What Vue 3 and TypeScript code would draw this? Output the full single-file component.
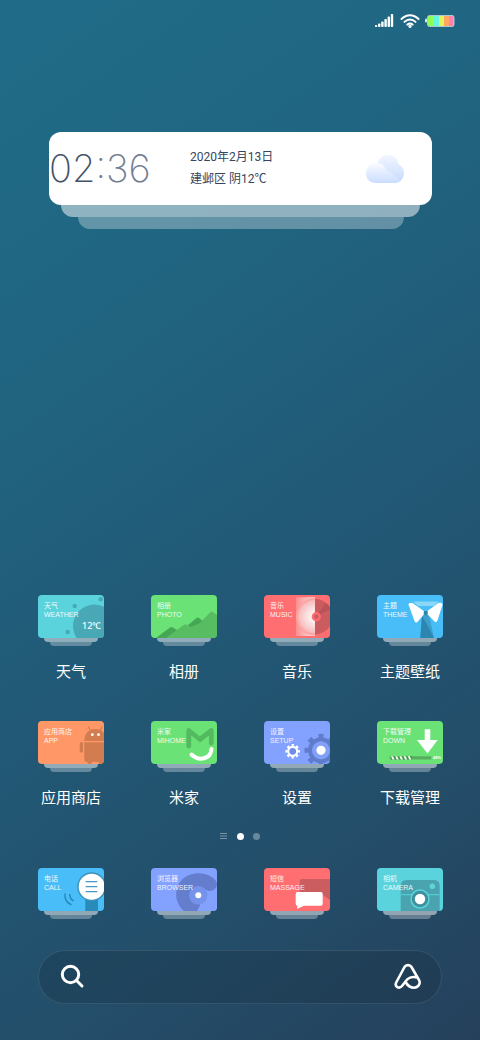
<script setup lang="ts">
interface AppItem {
  id: string
  label: string
  zh: string
  en: string
  tone: string
}

const apps: AppItem[] = [
  { id: 'weather', label: '天气', zh: '天气', en: 'WEATHER', tone: 'cyan' },
  { id: 'photo', label: '相册', zh: '相册', en: 'PHOTO', tone: 'green' },
  { id: 'music', label: '音乐', zh: '音乐', en: 'MUSIC', tone: 'red' },
  { id: 'theme', label: '主题壁纸', zh: '主题', en: 'THEME', tone: 'blue' },
  { id: 'store', label: '应用商店', zh: '应用商店', en: 'APP', tone: 'orange' },
  { id: 'mihome', label: '米家', zh: '米家', en: 'MIHOME', tone: 'green' },
  { id: 'setup', label: '设置', zh: '设置', en: 'SETUP', tone: 'violet' },
  { id: 'down', label: '下载管理', zh: '下载管理', en: 'DOWN', tone: 'green' },
]

const dock: AppItem[] = [
  { id: 'call', label: '', zh: '电话', en: 'CALL', tone: 'blue' },
  { id: 'browser', label: '', zh: '浏览器', en: 'BROWSER', tone: 'violet' },
  { id: 'message', label: '', zh: '短信', en: 'MASSAGE', tone: 'red' },
  { id: 'camera', label: '', zh: '相机', en: 'CAMERA', tone: 'cyan' },
]

const groups = [
  { name: 'apps', items: apps },
  { name: 'dock', items: dock },
]
</script>

<template>
  <div class="screen">
    <header class="status">
      <svg width="19" height="14" viewBox="0 0 19 14" fill="#fff">
        <rect x="0" y="11" width="2.200" height="2" rx=".8" />
        <rect x="3" y="9.500" width="2.400" height="3.500" rx=".8" />
        <rect x="6.200" y="7.500" width="2.400" height="5.500" rx=".8" />
        <rect x="9.400" y="5" width="2.400" height="8" rx=".8" />
        <rect x="12.600" y="2.500" width="2.400" height="10.500" rx=".8" />
        <rect x="15.800" y="0" width="2.400" height="13" rx=".8" />
      </svg>
      <svg class="wifi" width="20" height="14" viewBox="0 0 20 14" fill="none" stroke="#fff" stroke-width="2" stroke-linecap="round">
        <path d="M1.500 5C6.500 -.1 13.500 -.1 18.500 5" />
        <path d="M4.500 7.900C7.800 4.600 12.200 4.600 15.500 7.900" />
        <path d="M7.300 10.600C8.900 9 11.100 9 12.700 10.600" />
        <circle cx="10" cy="12.300" r=".7" />
      </svg>
      <svg width="30" height="14" viewBox="0 0 30 14">
        <rect x="0" y="4.500" width="2" height="4" rx="1" fill="#dbe8ec" />
        <rect x="2.500" y="1.500" width="26.500" height="11" rx="2" fill="#8dff52" />
        <path d="M8.500 1.500h5.500v11H8.500z" fill="#63f7e2" />
        <path d="M14 1.500h5v11h-5z" fill="#e5f35a" />
        <path d="M19 1.500h5v11h-5z" fill="#ffa760" />
        <path d="M24 1.500h4.500v11H24z" fill="#ff82b2" />
        <rect x="2.500" y="1.500" width="26.500" height="11" rx="2" fill="none" stroke="#a9c8d0" />
      </svg>
    </header>

    <section class="widget">
      <div class="panel">
        <time class="clock"><span class="hour">02</span><span class="minute">:36</span></time>
        <div class="info">
          <span>2020年2月13日</span>
          <span>建邺区 阴12℃</span>
        </div>
        <svg class="cloud" width="40" height="30" viewBox="0 0 40 30">
          <defs>
            <linearGradient id="cloudBack" x1="0" y1="0" x2="0" y2="1">
              <stop offset="0" stop-color="#f2f6ff" />
              <stop offset="1" stop-color="#c6dafd" />
            </linearGradient>
            <linearGradient id="cloudFront" x1="0" y1="0" x2="0" y2="1">
              <stop offset="0" stop-color="#fbfcff" />
              <stop offset="1" stop-color="#c9dcff" />
            </linearGradient>
          </defs>
          <path d="M12 11C14 4 18 1 23 1C29 1 33 5 33.500 10C37 12 39 15 39 19C39 25 35 29 29 29H12Z" fill="url(#cloudBack)" />
          <path d="M11 29C5 29 1 25 1 19.500C1 13 6 9 11.500 9C17 9 20 12 21 16C25 18 29 21 35 27C33 28.500 31 29 29 29Z" fill="url(#cloudFront)" />
        </svg>
      </div>
      <div class="layer layer-one"></div>
      <div class="layer layer-two"></div>
    </section>

    <main class="home">
      <template v-for="group in groups" :key="group.name">
        <nav class="grid" :class="group.name">
          <button v-for="app in group.items" :key="app.id" type="button" class="app" :aria-label="app.zh">
            <span class="card" :class="app.tone">
              <svg class="art" viewBox="0 0 66 43">
                <g v-if="app.id === 'weather'">
                  <g fill="#48a8b5">
                    <circle cx="56.500" cy="31" r="21.500" />
                    <circle cx="36.700" cy="11" r="2.200" />
                    <circle cx="62.700" cy="4.300" r="2.200" />
                    <circle cx="29.700" cy="37" r="2.200" />
                  </g>
                  <text x="44" y="34" class="degree">12℃</text>
                </g>
                <g v-else-if="app.id === 'photo'">
                  <path d="M5 43L19 32.500Q20.500 31.500 22 32.500L30 38L27 43ZM36 31L45.500 23Q46.700 22 48 23L54 28L44 36Z" fill="#45a653" />
                  <path d="M15 43L33 29.800Q34.500 28.800 36 29.800L40 32L49 28L59.500 17Q60.700 16 62 17L66 20V43Z" fill="#58bd62" />
                </g>
                <g v-else-if="app.id === 'music'">
                  <defs>
                    <radialGradient id="disc" gradientUnits="userSpaceOnUse" cx="51" cy="21.700" r="19">
                      <stop offset="0" stop-color="#fff" />
                      <stop offset=".5" stop-color="#fbdcdc" />
                      <stop offset=".85" stop-color="#f7bcbc" />
                      <stop offset=".88" stop-color="#fcaaaa" />
                      <stop offset="1" stop-color="#fca4a4" />
                    </radialGradient>
                    <linearGradient id="sleeve" x1="0" x2="1" y1="0" y2="0">
                      <stop offset="0" stop-color="#fa8e8e" />
                      <stop offset="1" stop-color="#fde4e4" />
                    </linearGradient>
                  </defs>
                  <path d="M32 2.300H51V41H32Z" fill="url(#sleeve)" />
                  <path d="M51 2.700A19 19 0 0 0 51 40.700Z" fill="url(#disc)" />
                  <path d="M51 4A17.700 17.700 0 0 1 51 39.400Z" fill="#ca5c60" />
                  <path d="M51 21.700L62 8A17.700 17.700 0 0 1 67 14Z" fill="#b85458" />
                  <circle cx="52.300" cy="21.700" r="3.400" fill="#c65d61" stroke="#ff6b6e" stroke-width="2.400" />
                </g>
                <g v-else-if="app.id === 'theme'">
                  <path d="M36 6.500H62L57 11H41Z" fill="#8bd7f8" />
                  <path d="M48.600 16L52.500 22L57 43H43.300L45 22Z" fill="#3ba0cd" />
                  <path d="M45 21L48.600 27L57 43H43.300Z" fill="#2c86b0" />
                  <path d="M31.500 9.500Q32 6.800 35.500 8L48.600 17.300L40.500 27Q38.500 28.500 37.500 26Z" fill="#fff" />
                  <path d="M65.500 9.500Q65 6.800 61.500 8L48.600 17.300L57.500 26.500Q59.500 28 60.500 25.500Z" fill="#fff" />
                  <path d="M47 16H50.500L51 18.500L48.700 20.500L46.500 18.500Z" fill="#2b86af" />
                </g>
                <g v-else-if="app.id === 'store'">
                  <g fill="#d27c50">
                    <path d="M46.300 20C46.300 12 51 8 57.300 8S68.300 12 68.300 20Z" />
                    <path d="M46.300 21.300H66V41H49Q46.300 41 46.300 38Z" />
                    <rect x="41.700" y="21" width="3.300" height="10.500" rx="1.600" />
                    <path d="M49.500 40h4.500v2q-2.200 2-4.500 0zM60.500 40h4.500v2q-2.200 2-4.500 0z" />
                  </g>
                  <path d="M50.500 6L53 10M64 6L61.500 10" stroke="#d27c50" stroke-width="1.200" stroke-linecap="round" />
                  <circle cx="54.300" cy="13.700" r="1.400" fill="#fff" />
                  <circle cx="60.500" cy="13.700" r="1.400" fill="#fff" />
                </g>
                <g v-else-if="app.id === 'mihome'" fill="none" stroke-linecap="round" stroke-linejoin="round">
                  <path d="M37.800 25V9.500L49 18.500L60.300 9.500V22" stroke="#54ba5f" stroke-width="4.800" />
                  <path d="M40.500 33.500C48 40.500 59.500 38.500 60.500 28" stroke="#fff" stroke-width="4" />
                </g>
                <g v-else-if="app.id === 'setup'">
                  <circle cx="57" cy="29.300" r="13" fill="#5f7ccc" />
                  <circle cx="57" cy="29.300" r="14" pathLength="160" fill="none" stroke="#5f7ccc" stroke-width="5" stroke-dasharray="9 11" stroke-dashoffset="4.500" />
                  <circle cx="57" cy="29.300" r="9" fill="#82a0f7" />
                  <circle cx="57" cy="29.300" r="4.600" fill="#fff" />
                  <circle cx="28.700" cy="30.300" r="4.500" fill="#708fe2" stroke="#fff" stroke-width="2.200" />
                  <circle cx="28.700" cy="30.300" r="6.300" pathLength="160" fill="none" stroke="#fff" stroke-width="2" stroke-dasharray="10 10" stroke-dashoffset="5" />
                </g>
                <g v-else-if="app.id === 'down'">
                  <path d="M47.700 8.300H53.300V19H60.700L50.500 32.500L40 19H47.700Z" fill="#fff" />
                  <path d="M12.700 35.300H54.300V38.500H12.700Z" fill="#58ad61" />
                  <path d="M14 36.900H35" stroke="#449b50" stroke-width="3.200" />
                  <path d="M14 35.300h2l1.500 3.200h-2zM18.200 35.300h2l1.500 3.200h-2zM22.400 35.300h2l1.500 3.200h-2zM26.600 35.300h2l1.500 3.200h-2zM30.800 35.300h2l1.500 3.200h-2z" fill="#fff" />
                  <text x="56" y="38" class="percent">48%</text>
                </g>
                <g v-else-if="app.id === 'call'">
                  <path d="M47.300 30H60V43H47.300Z" fill="#298bb9" />
                  <circle cx="53.700" cy="18.700" r="14.500" fill="#3c93be" />
                  <circle cx="53.700" cy="18.700" r="13" fill="#fff" />
                  <path d="M47.600 13.700H59.300M47.600 18.700H59.300M47.600 23.700H59.300" stroke="#4299c5" stroke-width="1.200" />
                  <path d="M27 25.500C26.500 31 29 35 33.500 36.800M31.800 26C31.500 29 33 31.500 35.500 33" fill="none" stroke="#2387b8" stroke-width="1.400" />
                </g>
                <g v-else-if="app.id === 'browser'">
                  <path d="M33 43C21 33 23 13 38 7C48 3 60 6 65 13C69 20 60 25 55.500 22L47 27L50 43Z" fill="#647dcc" />
                  <path d="M56 24L66 22V43H46Z" fill="#83a1ff" />
                  <circle cx="47.300" cy="27.300" r="9.300" fill="#7693ec" />
                  <circle cx="47.300" cy="27.300" r="3" fill="#fff" />
                </g>
                <g v-else-if="app.id === 'message'">
                  <path d="M38 11H66V32L59 27H38Q35.700 27 35.700 24.700V13.300Q35.700 11 38 11Z" fill="#cb5c60" />
                  <path d="M33.700 24H56.700Q58.700 24 58.700 26V35.700Q58.700 37.700 56.700 37.700H40L33 41L33.500 37.700Q31.700 37.700 31.700 35.700V26Q31.700 24 33.700 24Z" fill="#fff" />
                </g>
                <g v-else>
                  <path d="M23.700 18Q23.700 12 29.500 12H57Q62.700 12 62.700 18V43H23.700Z" fill="#49a4b0" />
                  <path d="M23.700 26.700H62.700" stroke="#5bd3dc" />
                  <circle cx="43" cy="31" r="9" fill="#3f919e" stroke="#5bd3dc" stroke-width="1.500" />
                  <circle cx="43" cy="31" r="5.200" fill="#fff" />
                  <circle cx="55.300" cy="18.300" r="2.800" fill="#5fd2db" />
                </g>
              </svg>
              <span class="caption">{{ app.zh }}</span>
              <span class="caption">{{ app.en }}</span>
            </span>
            <span class="shelf shelf-one"></span>
            <span class="shelf shelf-two"></span>
            <span v-if="app.label" class="label">{{ app.label }}</span>
          </button>
        </nav>
        <div v-if="group.name === 'apps'" class="pager">
          <svg width="8" height="8" viewBox="0 0 8 8" stroke="#7894a6" stroke-width="1">
            <path d="M0 1.500H7M0 4H7M0 6.500H7" />
          </svg>
          <span class="dot current"></span>
          <span class="dot"></span>
        </div>
      </template>
      <form class="search" role="search" @submit.prevent>
        <button type="submit" aria-label="搜索">
          <svg width="26" height="26" viewBox="0 0 26 26" fill="none" stroke="#fff" stroke-width="3" stroke-linecap="round">
            <circle cx="10.500" cy="10.500" r="8.200" />
            <path d="M16.800 16.800L22 22" />
          </svg>
        </button>
        <input type="search" aria-label="搜索内容" />
        <button type="button" aria-label="语音助手">
          <svg width="28" height="28" viewBox="0 0 28 28" fill="none" stroke="#fff" stroke-width="2.600" stroke-linecap="round" stroke-linejoin="round">
            <path d="M23.500 14.500C18 13 13.500 15 11.500 18.500L8 23C5 26.500 .3 23.500 2.200 19.500L10.500 4C12 1.500 16 1.500 17.500 4L25 17C27 21 24 24.700 20 24.700C16 24.700 13.500 22.500 11.500 19" />
          </svg>
        </button>
      </form>
    </main>
  </div>
</template>

<style>
body {
  margin: 0;
}
</style>

<style scoped>
.screen {
  box-sizing: border-box;
  min-height: 100vh;
  display: flex;
  flex-direction: column;
  padding-bottom: 36px;
  color: #fff;
  font-family: Roboto, "Noto Sans CJK SC", sans-serif;
  background: linear-gradient(145deg, #206c88 0%, #206682 25%, #215a77 52%, #234f6b 76%, #25405b 100%);
}

.status {
  display: flex;
  justify-content: flex-end;
  padding: 14px 25px 0;
}

.wifi {
  margin: 0 5px 0 6px;
}

.widget {
  margin: 104px 48px 0 49px;
}

.panel {
  display: flex;
  align-items: center;
  height: 73px;
  border-radius: 12px;
  background: #fff;
  color: #36445e;
}

.clock {
  width: 141px;
  padding-bottom: 2px;
  font-family: Inter, sans-serif;
  font-size: 38px;
  font-weight: 200;
  white-space: nowrap;
}

.hour {
  color: #43516a;
}

.minute {
  color: #737f91;
}

.info {
  flex: 1;
  display: flex;
  flex-direction: column;
  padding-bottom: 2px;
  font-size: 12px;
  line-height: 22px;
}

.cloud {
  margin-right: 27px;
}

.layer {
  height: 12px;
  border-radius: 0 0 12px 12px;
}

.layer-one {
  margin: 0 12px;
  background: rgba(255, 255, 255, 0.5);
}

.layer-two {
  margin: 0 28px 0 29px;
  background: rgba(255, 255, 255, 0.3);
}

.home {
  margin-top: auto;
}

.grid {
  display: grid;
  grid-template-columns: repeat(4, 66px);
  justify-content: space-between;
  row-gap: 40px;
  padding: 0 37px 0 38px;
}

.app {
  display: flex;
  flex-direction: column;
  align-items: center;
  padding: 0;
  border: 0;
  background: none;
  color: inherit;
  font: inherit;
}

.card {
  box-sizing: border-box;
  position: relative;
  display: flex;
  flex-direction: column;
  width: 66px;
  height: 43px;
  padding: 6px 0 0 6px;
  border-radius: 4px;
  overflow: hidden;
  text-align: left;
}

.art {
  position: absolute;
  inset: 0;
  width: 100%;
  height: 100%;
}

.caption {
  position: relative;
  font-family: "Liberation Sans", "Noto Sans CJK SC", sans-serif;
  font-size: 7px;
  line-height: 9px;
  white-space: nowrap;
  opacity: 0.9;
}

.degree {
  fill: #fff;
  font: 500 9px "Noto Sans", "Noto Sans CJK SC", sans-serif;
}

.percent {
  fill: #fff;
  font: 700 4px "Liberation Sans", sans-serif;
}

.cyan {
  background: #5bd3dd;
}

.green {
  background: #6be276;
}

.red {
  background: #ff6e70;
}

.blue {
  background: #48bdf8;
}

.orange {
  background: #ff9767;
}

.violet {
  background: #83a1ff;
}

.shelf {
  height: 4px;
  border-radius: 0 0 4px 4px;
}

.shelf-one {
  width: 54px;
  background: rgba(255, 255, 255, 0.5);
}

.shelf-two {
  width: 42px;
  background: rgba(255, 255, 255, 0.3);
}

.label {
  margin-top: 16px;
  font-size: 15px;
  line-height: 20px;
  white-space: nowrap;
}

.apps {
  row-gap: 39px;
}

.pager {
  display: flex;
  align-items: center;
  justify-content: center;
  gap: 9px;
  margin: 24px 0 28px;
}

.dot {
  width: 7px;
  height: 7px;
  border-radius: 50%;
  background: #67889b;
}

.current {
  background: #fff;
}

.search {
  box-sizing: border-box;
  display: flex;
  align-items: center;
  height: 54px;
  margin: 31px 38px 0;
  padding: 0 19px 0 21px;
  border: 1px solid rgba(255, 255, 255, 0.1);
  border-radius: 27px;
  background: rgba(24, 48, 62, 0.3);
}

.search button {
  display: flex;
  padding: 0;
  border: 0;
  background: none;
}

.search input {
  flex: 1;
  min-width: 0;
  border: 0;
  outline: 0;
  background: none;
  color: #fff;
  font: inherit;
}
</style>
